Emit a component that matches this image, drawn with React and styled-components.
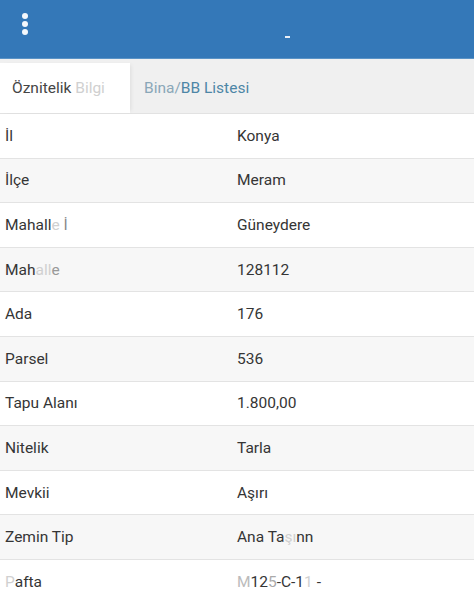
import React from 'react';
import styled, { createGlobalStyle } from 'styled-components';

const GlobalStyle = createGlobalStyle`
  html, body {
    margin: 0;
    padding: 0;
    background: #fff;
    font-family: Roboto, 'Noto Sans', sans-serif;
  }
`;

const Page = styled.div`
  width: 474px;
  height: 600px;
  overflow: hidden;
  display: flex;
  flex-direction: column;
  background: #fff;
`;

const Header = styled.div`
  height: 58px;
  flex-shrink: 0;
  background: #3478b8;
  border-bottom: 1px solid #5a93c6;
  display: flex;
  align-items: center;
  position: relative;
`;

const MenuButton = styled.div`
  width: 50px;
  height: 58px;
  display: flex;
  flex-direction: column;
  align-items: center;
  justify-content: center;
  gap: 1.6px;
  margin-top: -10px;
`;

const Dot = styled.span`
  width: 6px;
  height: 6px;
  border-radius: 50%;
  background: #f4f8fc;
`;

const Dash = styled.span`
  position: absolute;
  left: 285px;
  top: 36px;
  width: 5px;
  height: 2px;
  background: #e8eef6;
`;

const Tabs = styled.div`
  height: 54px;
  flex-shrink: 0;
  background: #f0f0f0;
  border-bottom: 1px solid #e2e2e2;
  display: flex;
`;

const Tab = styled.div`
  display: flex;
  align-items: center;
  padding: 0 ${p => (p.active ? '10px' : '14px')} 0 ${p => (p.active ? '12px' : '14px')};
  font-size: 15.5px;
  color: ${p => (p.active ? '#454545' : '#4d86a6')};
  background: ${p => (p.active ? '#fff' : 'transparent')};
  box-shadow: ${p => (p.active ? '3px 0 4px -2px rgba(0,0,0,0.08)' : 'none')};
  width: ${p => (p.active ? '108px' : 'auto')};
  white-space: nowrap;
  overflow: hidden;
  margin-top: 4px;
`;

const Faded = styled.span`
  color: ${p => p.tone || '#d0d0d0'};
`;

const Table = styled.div`
  display: flex;
  flex-direction: column;
`;

const Row = styled.div`
  height: 43.6px;
  flex-shrink: 0;
  display: grid;
  grid-template-columns: 237px 1fr;
  align-items: center;
  background: ${p => (p.shaded ? '#f7f7f7' : '#fff')};
  border-bottom: 1px solid #e3e3e3;
  font-size: 15.5px;
  color: #353535;
`;

const Label = styled.div`
  padding-left: 5px;
  white-space: nowrap;
`;

const Value = styled.div`
  white-space: nowrap;
`;

const rows = [
  [<>İl</>, <>Konya</>],
  [<>İlçe</>, <>Meram</>],
  [<>Mahall<Faded>e</Faded> <Faded tone="#888">İ</Faded></>, <>Güneydere</>],
  [<>Mah<Faded>all</Faded><Faded tone="#999">e</Faded></>, <>128112</>],
  [<>Ada</>, <>176</>],
  [<>Parsel</>, <>536</>],
  [<>Tapu Alanı</>, <>1.800,00</>],
  [<>Nitelik</>, <>Tarla</>],
  [<>Mevkii</>, <>Aşırı</>],
  [<>Zemin Tip</>, <>Ana Ta<Faded>şı</Faded>nn</>],
  [<><Faded>P</Faded>afta</>, <><Faded tone="#bbb">M</Faded>12<Faded tone="#aaa">5</Faded>-C-1<Faded>1</Faded> -</>],
];

export default function App() {
  return (
    <Page>
      <GlobalStyle />
      <Header>
        <MenuButton>
          <Dot />
          <Dot />
          <Dot />
        </MenuButton>
        <Dash />
      </Header>
      <Tabs>
        <Tab active>
          Öznitelik&nbsp;<Faded>Bilgi</Faded>
        </Tab>
        <Tab>
          <Faded tone="#8aa7b8">Bina/</Faded>BB Listesi
        </Tab>
      </Tabs>
      <Table>
        {rows.map(([label, value], i) => (
          <Row key={i} shaded={i % 2 === 1}>
            <Label>{label}</Label>
            <Value>{value}</Value>
          </Row>
        ))}
      </Table>
    </Page>
  );
}
